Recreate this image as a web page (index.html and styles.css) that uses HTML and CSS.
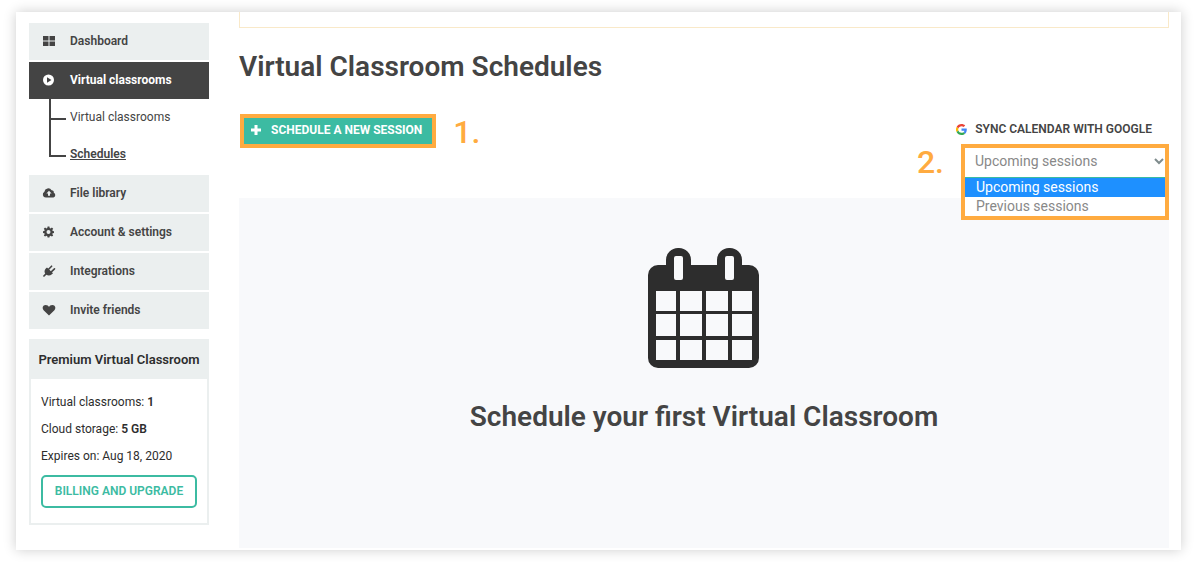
FILE: index.html
```html
<!doctype html>
<html lang="en">
<head>
<meta charset="UTF-8">
<title>Virtual Classroom Schedules</title>
<meta name="viewport" content="width=device-width, initial-scale=1">
<link rel="stylesheet" href="styles.css">
</head>

<body>
<div class="page">

   <aside class="sidebar">
      <nav>
         <ul class="menu">
            <li>
               <a class="menu-link" href="#">
                  <svg class="icon" viewBox="0 0 14 14"><path d="M1 2h5.500v4.500H1zM7.500 2h5.500v4.500H7.500zM1 7.500h5.500V12H1zM7.500 7.500h5.500V12H7.500z"/></svg>
                  Dashboard
               </a>
            </li>
            <li>
               <a class="menu-link active" href="#">
                  <svg class="icon" viewBox="0 0 14 14"><path fill-rule="evenodd" d="M6.500 1.500a5.500 5.500 0 1 0 0 11 5.500 5.500 0 0 0 0-11zM5 4.300v5.400L9.500 7z"/></svg>
                  Virtual classrooms
               </a>
               <ul class="submenu">
                  <li><a href="#">Virtual classrooms</a></li>
                  <li><a class="current" href="#">Schedules</a></li>
               </ul>
            </li>
            <li>
               <a class="menu-link" href="#">
                  <svg class="icon" viewBox="0 0 14 14"><path fill-rule="evenodd" d="M3.800 11.500A3.100 3.100 0 0 1 2.400 5.700 3.900 3.900 0 0 1 9.600 4.200a2.300 2.300 0 0 1 2.200 2.600A2.500 2.500 0 0 1 11.400 11.500zM7 4.700 4.400 7.500H6V9.800h2V7.500h1.600z"/></svg>
                  File library
               </a>
            </li>
            <li>
               <a class="menu-link" href="#">
                  <svg class="icon" viewBox="0 0 14 14"><path fill-rule="evenodd" d="M5.600 1.500h1.800l.3 1.500.9.400 1.300-.9 1.300 1.300-.9 1.300.4.900 1.300.200v1.700l-1.300.300-.4.900.9 1.300-1.300 1.200-1.300-.8-.9.400-.3 1.400H5.600L5.300 11.200l-.9-.4-1.300.8-1.300-1.200.9-1.300-.4-.9L1 7.900V6.200L2.300 6l.4-.9-.9-1.300 1.300-1.300 1.300.9.900-.4zM6.500 5a2 2 0 1 0 0 4 2 2 0 0 0 0-4z"/></svg>
                  Account &amp; settings
               </a>
            </li>
            <li>
               <a class="menu-link" href="#">
                  <svg class="icon" viewBox="0 0 14 14"><path d="M5 3.500 11 9.200 9.900 10.200C8.300 11.600 6 11.800 4.400 10.700L2 13 .9 12l2.300-2.400C2.100 8 2.400 6 3.800 4.600z"/><path d="M6.600 5.200 9.600 2.200M9.300 7.900 12.500 4.900" fill="none" stroke="currentColor" stroke-width="1.600" stroke-linecap="round"/></svg>
                  Integrations
               </a>
            </li>
            <li>
               <a class="menu-link" href="#">
                  <svg class="icon" viewBox="0 0 14 14"><path d="M7 12.500 1.600 7.200C-.4 4.800 1 2 3.700 2 5.300 2 6.500 2.900 7 4c.5-1.100 1.700-2 3.300-2C13 2 14.400 4.800 12.400 7.200z"/></svg>
                  Invite friends
               </a>
            </li>
         </ul>
      </nav>

      <section class="plan">
         <h2>Premium Virtual Classroom</h2>
         <div class="plan-body">
            <p>Virtual classrooms: <b>1</b></p>
            <p>Cloud storage: <b>5 GB</b></p>
            <p>Expires on: Aug 18, 2020</p>
            <button class="btn-outline" type="button">Billing and upgrade</button>
         </div>
      </section>
   </aside>

   <main class="content">
      <div class="notice"></div>
      <h1>Virtual Classroom Schedules</h1>

      <div class="toolbar">
         <div class="step">
            <button class="btn-new" type="button">
               <svg viewBox="0 0 10 10"><path d="M3.500 0h3v3.500H10v3H6.500V10h-3V6.500H0v-3h3.500z"/></svg>
               Schedule a new session
            </button>
            <span class="step-number">1.</span>
         </div>

         <div class="filters">
            <a class="sync" href="#">
               <svg viewBox="0 0 48 48">
                  <path fill="#EA4335" d="M24 9.500c3.500 0 6.700 1.200 9.200 3.600l6.900-6.900C35.900 2.400 30.500 0 24 0 14.600 0 6.500 5.400 2.600 13.200l8 6.200C12.400 13.700 17.700 9.500 24 9.500z"/>
                  <path fill="#4285F4" d="M47 24.600c0-1.600-.2-3.100-.4-4.600H24v9h12.900c-.6 3-2.300 5.500-4.700 7.200l7.700 6C44.400 38 47 32 47 24.600z"/>
                  <path fill="#FBBC05" d="M10.500 28.600a14.500 14.500 0 0 1 0-9.200l-8-6.200a24 24 0 0 0 0 21.600z"/>
                  <path fill="#34A853" d="M24 48c6.500 0 11.900-2.100 15.900-5.800l-7.700-6c-2.200 1.500-4.900 2.300-8.200 2.300-6.300 0-11.600-4.200-13.500-9.900l-8 6.200C6.500 42.600 14.600 48 24 48z"/>
               </svg>
               Sync calendar with Google
            </a>
            <div class="step">
               <span class="step-number">2.</span>
               <div class="dropdown">
                  <select aria-label="Sessions to show">
                     <option>Upcoming sessions</option>
                     <option>Previous sessions</option>
                  </select>
                  <svg class="chevron" viewBox="0 0 10 7"><path d="M1 1l4 4 4-4"/></svg>
                  <ul class="options" role="listbox" aria-label="Sessions to show">
                     <li role="option" aria-selected="true">Upcoming sessions</li>
                     <li role="option" aria-selected="false">Previous sessions</li>
                  </ul>
               </div>
            </div>
         </div>
      </div>

      <section class="empty">
         <svg class="calendar" viewBox="0 0 112 120">
            <path fill="#2d2d2d" fill-rule="evenodd" d="M10 17h8v-5a12 12 0 0 1 12-12h1a12 12 0 0 1 12 12v5h26v-5a12 12 0 0 1 12-12h1a12 12 0 0 1 12 12v5h7a10 10 0 0 1 10 10v83a10 10 0 0 1-10 10H10A10 10 0 0 1 0 110V27A10 10 0 0 1 10 17z
               M28 8a2 2 0 0 0-2 2v20a2 2 0 0 0 2 2h5a2 2 0 0 0 2-2V10a2 2 0 0 0-2-2z
               M79 8a2 2 0 0 0-2 2v20a2 2 0 0 0 2 2h5a2 2 0 0 0 2-2V10a2 2 0 0 0-2-2z
               M8 43h20v20H8zM32 43h22v20H32zM58 43h22v20H58zM84 43h20v20H84z
               M8 66h20v22H8zM32 66h22v22H32zM58 66h22v22H58zM84 66h20v22H84z
               M8 92h20v20H8zM32 92h22v20H32zM58 92h22v20H58zM84 92h20v20H84z"/>
         </svg>
         <h2>Schedule your first Virtual Classroom</h2>
      </section>
   </main>

</div>
</body>
</html>
```

FILE: styles.css
```css
*, *::before {
   box-sizing: border-box;
}

body, h1, h2, p, ul {
   margin: 0;
   padding: 0;
}

body {
   background: #fff;
   color: #444;
   font-family: Roboto, Arial, sans-serif;
   font-size: 12px;
   padding: 12px 16px;
}

ul {
   list-style: none;
}

a {
   color: inherit;
   text-decoration: none;
}

button, select {
   font-family: inherit;
   cursor: pointer;
}

.page {
   display: flex;
   gap: 30px;
   min-height: calc(100vh - 24px);
   padding: 0 12px 2px 13px;
   background: #fff;
   box-shadow: 0 0 12px rgba(0, 0, 0, 0.2);
}

/* sidebar */
.sidebar {
   flex: 0 0 180px;
   padding-top: 11px;
}

.menu {
   display: grid;
   gap: 2px;
}

.menu-link {
   display: flex;
   align-items: center;
   gap: 14px;
   height: 37px;
   padding: 0 0 2px 13px;
   background: #ebefef;
   font-weight: 600;
}

.menu-link.active {
   background: #444;
   color: #fff;
   font-weight: 700;
}

.icon {
   width: 14px;
   height: 14px;
   fill: currentColor;
}

.submenu li {
   position: relative;
   padding-left: 41px;
   line-height: 37px;
}

/* tree lines */
.submenu li::before {
   content: "";
   position: absolute;
   left: 20px;
   top: -17px;
   width: 17px;
   height: 38px;
   border-left: 2px solid #444;
   border-bottom: 2px solid #444;
}

.submenu li:first-child::before {
   top: 0;
   height: 21px;
}

.submenu .current {
   font-weight: 600;
   text-decoration: underline;
}

.plan {
   margin-top: 10px;
   border: 2px solid #ebefef;
   color: #2d2d2d;
}

.plan h2 {
   background: #ebefef;
   font-size: 13px;
   font-weight: 600;
   line-height: 38px;
   text-align: center;
   white-space: nowrap;
}

.plan-body {
   padding: 10px 10px 15px;
}

.plan-body p {
   line-height: 27px;
}

.plan-body b {
   font-weight: 600;
}

.btn-outline {
   display: block;
   width: 100%;
   height: 33px;
   margin-top: 5px;
   padding: 0 0 2px;
   background: #fff;
   border: 2px solid #3cbba2;
   border-radius: 5px;
   color: #3cbba2;
   font-size: 12px;
   font-weight: 600;
   text-transform: uppercase;
}

/* main column */
.content {
   flex: 1;
   display: flex;
   flex-direction: column;
   min-width: 0;
}

.notice {
   height: 16px;
   border: 1px solid #f9e9c9;
   border-top: 0;
}

h1, .empty h2 {
   font-size: 28px;
   font-weight: 600;
   line-height: 36px;
}

h1 {
   margin-top: 21px;
}

.toolbar {
   display: flex;
   justify-content: space-between;
   align-items: flex-start;
   margin-top: 29px;
   padding-left: 1px;
}

.step {
   display: flex;
   align-items: center;
   gap: 17px;
}

.step-number {
   padding-top: 2px;
   color: #ffab40;
   font-size: 32px;
   font-weight: 500;
   line-height: 32px;
}

.btn-new {
   display: flex;
   align-items: center;
   gap: 10px;
   height: 34px;
   padding: 0 10px 3px 7px;
   background: #3cbba2;
   border: 4px solid #ffab40;
   color: #fff;
   font-size: 12px;
   font-weight: 700;
   text-transform: uppercase;
}

.btn-new svg {
   width: 10px;
   height: 10px;
   fill: currentColor;
}

.filters {
   padding-top: 5px;
}

.sync {
   display: flex;
   justify-content: flex-end;
   align-items: center;
   gap: 8px;
   padding-right: 17px;
   font-weight: 600;
   line-height: 20px;
   text-transform: uppercase;
}

.sync svg {
   width: 11px;
   height: 11px;
}

.filters .step {
   margin-top: 5px;
}

.dropdown {
   position: relative;
   width: 208px;
   border: 4px solid #ffab40;
   border-bottom: 0;
}

.dropdown select {
   appearance: none;
   display: block;
   width: 100%;
   height: 30px;
   padding: 0 10px 3px;
   background: #fff;
   border: 0;
   border-bottom: 1px solid #3cbba2;
   border-radius: 0;
   color: #888;
   font-size: 14px;
}

.chevron {
   position: absolute;
   right: 1px;
   top: 10px;
   width: 10px;
   height: 7px;
   fill: none;
   stroke: #7f8c8d;
   stroke-width: 2;
   pointer-events: none;
}

.options {
   position: absolute;
   z-index: 1;
   top: 100%;
   left: -4px;
   right: -4px;
   padding-bottom: 1px;
   background: #fff;
   border: 4px solid #ffab40;
   border-top: 0;
   color: #888;
   font-size: 14px;
   line-height: 18px;
}

.options li {
   padding-left: 11px;
}

.options li[aria-selected="true"] {
   padding-bottom: 1px;
   background: #1e90ff;
   color: #fff;
}

.empty {
   flex: 1;
   margin-top: 20px;
   padding: 50px 20px 0;
   background: #f8f9fb;
   text-align: center;
}

.calendar {
   display: block;
   width: 112px;
   height: 120px;
   margin: 0 auto;
}

.empty h2 {
   margin-top: 31px;
}
```
